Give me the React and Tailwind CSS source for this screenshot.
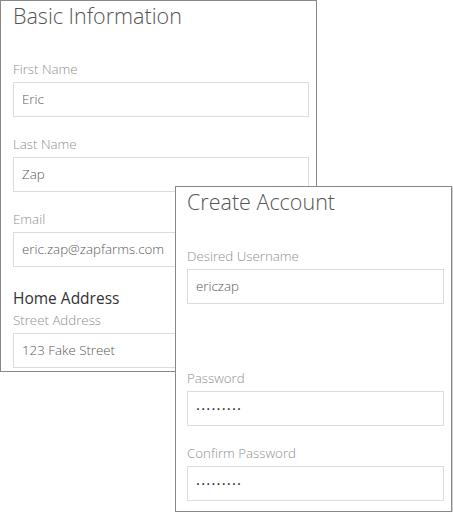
const fontStack = { fontFamily: '"Open Sans", "Noto Sans", sans-serif' };

function Field({ label, value, password = false }) {
  return (
    <div className="flex flex-col gap-[4px]">
      <label className="text-[13.3px] leading-[18px] font-light text-[#8f8f8f]">{label}</label>
      <div className="h-[35px] border border-[#dcdcdc] bg-white flex items-center px-[8px]">
        {password ? (
          <span className="text-[15px] leading-none tracking-[1.2px] text-[#222]">·········</span>
        ) : (
          <span className="text-[13.3px] font-light text-[#5a5a5a]">{value}</span>
        )}
      </div>
    </div>
  );
}

export default function App() {
  return (
    <div className="relative w-[453px] h-[512px] bg-white overflow-hidden" style={fontStack}>
      {/* Basic Information card */}
      <div className="absolute left-0 top-0 w-[317px] h-[372px] border border-[#888] bg-white pl-[12px] pr-[7px]">
        <h2 className="text-[21.5px] leading-[30px] font-light text-[#555]">Basic Information</h2>
        <div className="mt-[29px] flex flex-col gap-[18px]">
          <Field label="First Name" value="Eric" />
          <Field label="Last Name" value="Zap" />
          <Field label="Email" value="eric.zap@zapfarms.com" />
        </div>
        <h3 className="mt-[21px] text-[15.5px] leading-[20px] text-[#333]">Home Address</h3>
        <div className="mt-[3px]">
          <Field label="Street Address" value="123 Fake Street" />
        </div>
      </div>

      {/* Create Account card */}
      <div className="absolute left-[175px] top-[186px] w-[277px] h-[326px] border border-[#888] bg-white pl-[11px] pr-[7px] shadow-[1px_1px_0_#d0d0d0]">
        <h2 className="text-[21.5px] leading-[30px] font-light text-[#555]">Create Account</h2>
        <div className="mt-[30px]">
          <Field label="Desired Username" value="ericzap" />
        </div>
        <div className="mt-[65px] flex flex-col gap-[18px]">
          <Field label="Password" password />
          <Field label="Confirm Password" password />
        </div>
      </div>
    </div>
  );
}
